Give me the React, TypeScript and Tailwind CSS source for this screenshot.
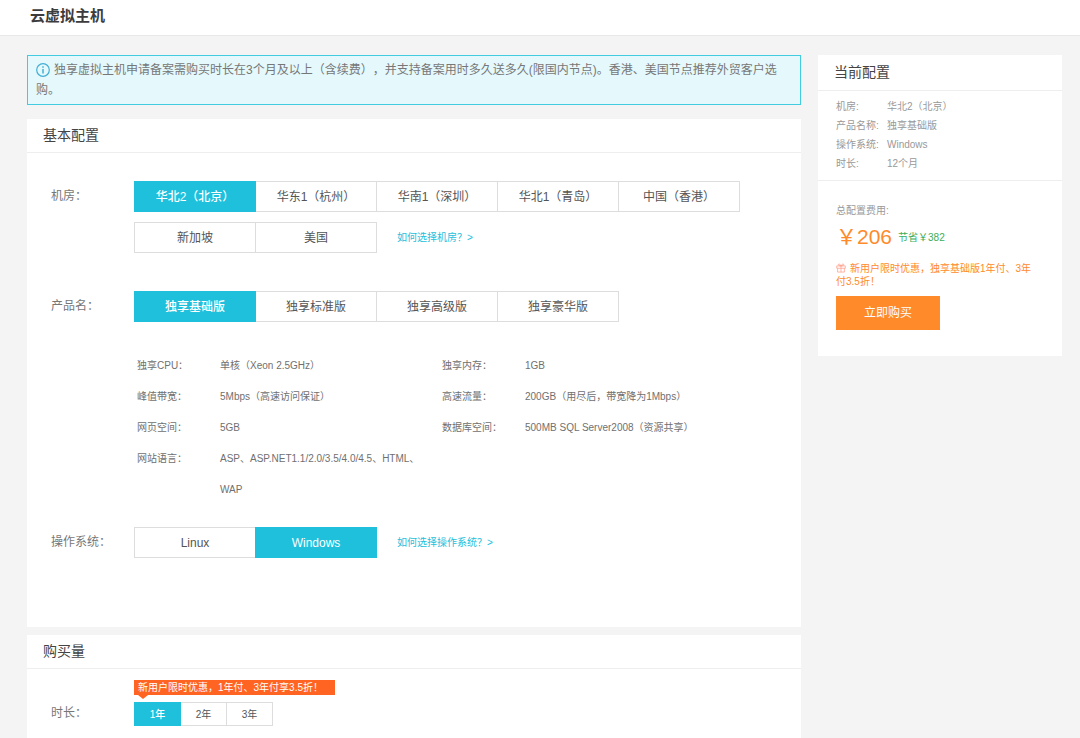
import { useState, type ReactNode } from "react";
import clsx from "clsx";

const REGIONS = [
  "华北2（北京）",
  "华东1（杭州）",
  "华南1（深圳）",
  "华北1（青岛）",
  "中国（香港）",
  "新加坡",
  "美国",
];

const PRODUCTS = ["独享基础版", "独享标准版", "独享高级版", "独享豪华版"];

const SYSTEMS = ["Linux", "Windows"];

const DURATIONS = ["1年", "2年", "3年"];

const SPECS_LEFT = [
  { name: "独享CPU：", value: "单核（Xeon 2.5GHz）" },
  { name: "峰值带宽：", value: "5Mbps（高速访问保证）" },
  { name: "网页空间：", value: "5GB" },
  { name: "网站语言：", value: "ASP、ASP.NET1.1/2.0/3.5/4.0/4.5、HTML、WAP" },
];

const SPECS_RIGHT = [
  { name: "独享内存：", value: "1GB" },
  { name: "高速流量：", value: "200GB（用尽后，带宽降为1Mbps）" },
  { name: "数据库空间：", value: "500MB SQL Server2008（资源共享）" },
];

function InfoIcon() {
  return (
    <svg
      className="mr-1 inline-block size-[14px] align-[-3px]"
      viewBox="0 0 14 14"
      fill="none"
      stroke="#43aed2"
      aria-hidden="true"
    >
      <circle cx="7" cy="7" r="6.3" strokeWidth="1.2" />
      <path d="M7 6v4.6" strokeWidth="1.5" />
      <path d="M7 3.2v1.5" strokeWidth="1.5" />
    </svg>
  );
}

function GiftIcon() {
  return (
    <svg
      className="mr-1 inline-block size-[10px] align-[-1px]"
      viewBox="0 0 11 11"
      fill="none"
      stroke="#ff9a86"
      strokeWidth="0.8"
      aria-hidden="true"
    >
      <path d="M0.8 3.2h9.4v2.6H0.8zM1.8 5.8v4.2h7.4V5.8M5.5 3.2V10" />
      <path d="M5.5 3.2C4.6 1 2.6 0.4 2.6 1.8c0 1 1.200 1.400 2.900 1.400s2.900-.4 2.900-1.400C8.400.4 6.400 1 5.500 3.200z" />
    </svg>
  );
}

interface OptionsProps {
  label: string;
  items: string[];
  value: string;
  onChange: (item: string) => void;
  small?: boolean;
  children?: ReactNode;
}

function Options({ label, items, value, onChange, small, children }: OptionsProps) {
  return (
    <div role="group" aria-label={label} className="flex flex-1 flex-wrap gap-y-[10px]">
      {items.map((item) => (
        <button
          key={item}
          type="button"
          aria-pressed={item === value}
          onClick={() => onChange(item)}
          className={clsx(
            "-mr-px border",
            small ? "h-6 w-[47px] text-[10px]" : "h-[31px] w-[122px] text-xs",
            item === value
              ? "relative border-[#1ec0dc] bg-[#1ec0dc] font-medium text-white"
              : "border-[#dddddd] bg-white text-[#555555]"
          )}
        >
          {item}
        </button>
      ))}
      {children}
    </div>
  );
}

function Row({ label, children }: { label: string; children: ReactNode }) {
  return (
    <div className="flex pl-6">
      <div className="w-[83px] shrink-0 text-xs leading-[31px] text-[#777777]">{label}</div>
      {children}
    </div>
  );
}

function HelpLink({ children }: { children: ReactNode }) {
  return (
    <a href="#" className="ml-[21px] text-[10px] leading-[31px] text-[#1ec0dc]">
      {children}
    </a>
  );
}

function SpecList({ items }: { items: { name: string; value: string }[] }) {
  return (
    <dl className="w-[305px]">
      {items.map((item) => (
        <div key={item.name} className="flex">
          <dt className="w-[83px] shrink-0">{item.name}</dt>
          <dd className="w-[205px]">{item.value}</dd>
        </div>
      ))}
    </dl>
  );
}

function CardTitle({ children }: { children: ReactNode }) {
  return (
    <h2 className="h-[34px] border-b border-[#eeeeee] px-4 text-sm leading-[32px] text-[#444444]">
      {children}
    </h2>
  );
}

export default function App() {
  const [region, setRegion] = useState(REGIONS[0]);
  const [product, setProduct] = useState(PRODUCTS[0]);
  const [system, setSystem] = useState(SYSTEMS[1]);
  const [duration, setDuration] = useState(DURATIONS[0]);

  const summary = [
    { name: "机房:", value: region },
    { name: "产品名称:", value: product },
    { name: "操作系统:", value: system },
    { name: "时长:", value: `${parseInt(duration) * 12}个月` },
  ];

  return (
    <div
      lang="zh-CN"
      className="flex min-h-screen flex-col bg-[#f4f4f4] font-['Liberation_Sans','Noto_Sans_CJK_SC',sans-serif] [text-spacing-trim:space-all]"
    >
      <header className="h-9 border-b border-[#e8e8e8] bg-white px-[30px]">
        <h1 className="text-[15px] leading-[31px] font-bold text-[#3c3c3c]">云虚拟主机</h1>
      </header>

      <div className="flex flex-1 gap-[17px] pt-[19px] pr-[18px] pl-[27px]">
        <main className="flex flex-1 flex-col">
          <p className="border border-[#43cbe2] bg-[#e5f9fd] py-1 pr-4 pl-2 text-xs leading-5 text-[#777777]">
            <InfoIcon />
            独享虚拟主机申请备案需购买时长在3个月及以上（含续费），并支持备案用时多久送多久(限国内节点)。香港、美国节点推荐外贸客户选购。
          </p>

          {/* Basic configuration */}
          <section className="mt-[14px] bg-white pb-[69px]">
            <CardTitle>基本配置</CardTitle>
            <div className="pt-7">
              <Row label="机房：">
                <Options label="机房" items={REGIONS} value={region} onChange={setRegion}>
                  <HelpLink>如何选择机房？&gt;</HelpLink>
                </Options>
              </Row>
            </div>
            <div className="pt-[38px]">
              <Row label="产品名：">
                <Options label="产品名" items={PRODUCTS} value={product} onChange={setProduct} />
              </Row>
            </div>
            <div className="flex pt-7 pb-[22px] pl-[110px] text-[10px] leading-[31px] text-[#707070]">
              <SpecList items={SPECS_LEFT} />
              <SpecList items={SPECS_RIGHT} />
            </div>
            <Row label="操作系统：">
              <Options label="操作系统" items={SYSTEMS} value={system} onChange={setSystem}>
                <HelpLink>如何选择操作系统？&gt;</HelpLink>
              </Options>
            </Row>
          </section>

          {/* Purchase amount */}
          <section className="mt-2 flex-1 bg-white pb-3">
            <CardTitle>购买量</CardTitle>
            <div className="flex pt-[11px] pl-6 text-[#777777]">
              <div className="w-[83px] shrink-0 pt-[18px] text-xs leading-[31px]">时长：</div>
              <div>
                <div className="relative mb-[7px] h-[15px] w-[201px] bg-[#ff6422] px-1 text-[10px] leading-[15px] text-white">
                  新用户限时优惠，1年付、3年付享3.5折！
                  <svg
                    className="absolute top-full left-1 h-1 w-[10px]"
                    viewBox="0 0 10 4"
                    fill="#ff6422"
                    aria-hidden="true"
                  >
                    <path d="M0 0h10L5 4z" />
                  </svg>
                </div>
                <Options
                  label="时长"
                  items={DURATIONS}
                  value={duration}
                  onChange={setDuration}
                  small
                />
              </div>
            </div>
          </section>
        </main>

        {/* Order summary */}
        <aside className="w-[244px] self-start bg-white text-[10px] text-[#999999]">
          <h2 className="h-9 border-b border-[#eeeeee] px-4 text-sm leading-[34px] text-[#444444]">
            当前配置
          </h2>
          <dl className="border-b border-[#eeeeee] px-[18px] pt-[6px] pb-[7px] leading-[19px]">
            {summary.map((item) => (
              <div key={item.name} className="flex">
                <dt className="w-[51px] shrink-0">{item.name}</dt>
                <dd>{item.value}</dd>
              </div>
            ))}
          </dl>
          <div className="pt-5 pr-6 pb-[26px] pl-[18px]">
            <p className="leading-5">总配置费用:</p>
            <p className="flex items-center gap-[6px] text-[#3aae5c]">
              <span className="text-[21px] leading-8 text-[#ff8a2a]">￥206</span>
              节省￥382
            </p>
            <p className="mt-[9px] leading-[13px] text-[#ff8a2a]">
              <GiftIcon />
              新用户限时优惠，独享基础版1年付、3年付3.5折！
            </p>
            <button
              type="button"
              className="mt-2 h-[34px] w-[104px] bg-[#ff8a2a] text-xs text-white"
            >
              立即购买
            </button>
          </div>
        </aside>
      </div>
    </div>
  );
}
